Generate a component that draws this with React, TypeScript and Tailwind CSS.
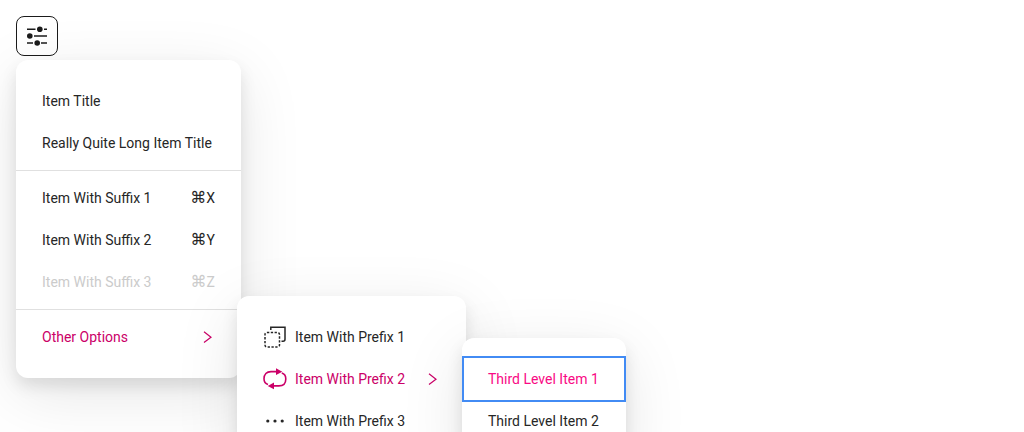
import React from 'react';

const itemClass =
  'mx-0.5 flex h-[42px] items-center px-6 text-left text-sm whitespace-nowrap outline-none';

const panelClass =
  'flex flex-col rounded-xl bg-white py-5 shadow-[0_8px_16px_0_rgba(0,0,0,0.1),0_16px_64px_0_rgba(0,0,0,0.1)]';

function SlidersIcon() {
  return (
    <svg className="size-6" viewBox="0 0 24 24" fill="none" stroke="currentColor" strokeWidth="1.5" aria-hidden="true">
      <path d="M2 5.3h8.5M19 5.3h3M9 12h13M2 19h6M16 19h6" />
      <g fill="currentColor" stroke="none">
        <circle cx="14.8" cy="5.3" r="2.8" />
        <circle cx="4.8" cy="12" r="2.8" />
        <circle cx="12.2" cy="19" r="2.8" />
      </g>
    </svg>
  );
}

function ChevronIcon() {
  return (
    <svg className="size-4" viewBox="0 0 16 16" fill="none" stroke="currentColor" strokeWidth="1.2" aria-hidden="true">
      <path d="M5 2.8L12 8.2L5 13.6" />
    </svg>
  );
}

function DuplicateIcon() {
  return (
    <svg className="size-6" viewBox="0 0 24 24" fill="none" stroke="currentColor" strokeWidth="1.5" aria-hidden="true">
      <path d="M7.8 5V2.2H22V14.2a2 2 0 0 1-2 2h-1.5" />
      <rect x="2" y="7.5" width="14.5" height="14.5" rx="2" strokeDasharray="2.3 1.5" />
    </svg>
  );
}

function RepeatIcon() {
  return (
    <svg className="size-6" viewBox="0 0 24 24" fill="none" stroke="currentColor" strokeWidth="1.6" aria-hidden="true">
      <path d="M5 17.6C2.5 16.8 1 14.5 1 11.8C1 7.2 3.6 4.6 8 4.6H14" />
      <path d="M18.8 6.1C21.3 6.9 22.8 9.2 22.8 11.9C22.8 16.3 20.2 18.9 15.8 18.9H10" />
      <path d="M13 1.3L19.3 4.7L13 8.1ZM11 15.5L4.7 18.9L11 22.3Z" fill="currentColor" stroke="none" />
    </svg>
  );
}

function DotsIcon() {
  return (
    <svg className="size-6" viewBox="0 0 24 24" fill="currentColor" aria-hidden="true">
      <circle cx="4.8" cy="12" r="1.6" />
      <circle cx="12" cy="12" r="1.6" />
      <circle cx="19.2" cy="12" r="1.6" />
    </svg>
  );
}

function Separator() {
  return <hr className="my-1.5 border-0 border-t border-[#e0e0e0]" />;
}

function ShortcutItem({ label, letter, disabled = false }: { label: string; letter: string; disabled?: boolean }) {
  return (
    <button type="button" role="menuitem" disabled={disabled} className={`${itemClass} justify-between disabled:text-[#cbcbcb]`}>
      <span>{label}</span>
      <span className="flex items-center">
        <span className="font-['DejaVu_Sans',sans-serif] text-base">⌘</span>
        {letter}
      </span>
    </button>
  );
}

function ThirdLevelMenu() {
  return (
    <div role="menu" aria-label="Item With Prefix 2" className={`${panelClass} absolute -top-5 left-full -ml-1 w-[164px] text-[#262626]`}>
      <button type="button" role="menuitem" className={`${itemClass} text-[#f90984] ring-2 ring-[#428bf4]`}>
        Third Level Item 1
      </button>
      <button type="button" role="menuitem" className={itemClass}>
        Third Level Item 2
      </button>
    </div>
  );
}

function OptionsMenu() {
  return (
    <div role="menu" aria-label="Other Options" className={`${panelClass} absolute -top-5 left-full -ml-1 w-[229px] text-[#262626]`}>
      <button type="button" role="menuitem" className={`${itemClass} gap-2`}>
        <DuplicateIcon />
        Item With Prefix 1
      </button>
      <div className="relative flex flex-col">
        <button type="button" role="menuitem" aria-haspopup="menu" aria-expanded="true" className={`${itemClass} gap-2 text-[#cb0068]`}>
          <RepeatIcon />
          <span className="grow">Item With Prefix 2</span>
          <ChevronIcon />
        </button>
        <ThirdLevelMenu />
      </div>
      <button type="button" role="menuitem" className={`${itemClass} gap-2`}>
        <DotsIcon />
        Item With Prefix 3
      </button>
    </div>
  );
}

export default function App() {
  return (
    <main className="h-screen overflow-hidden bg-white p-4 font-[Roboto,'Liberation_Sans',sans-serif] text-[#262626]">
      <button
        type="button"
        aria-label="Options"
        aria-haspopup="menu"
        aria-expanded="true"
        className="flex h-10 w-[42px] items-center justify-center rounded-lg border border-[#1b1b1b] text-[#1b1b1b]"
      >
        <SlidersIcon />
      </button>
      <div role="menu" aria-label="Options" className={`${panelClass} relative mt-1 w-[225px]`}>
        <button type="button" role="menuitem" className={itemClass}>
          Item Title
        </button>
        <button type="button" role="menuitem" className={itemClass}>
          Really Quite Long Item Title
        </button>
        <Separator />
        <ShortcutItem label="Item With Suffix 1" letter="X" />
        <ShortcutItem label="Item With Suffix 2" letter="Y" />
        <ShortcutItem label="Item With Suffix 3" letter="Z" disabled />
        <Separator />
        <div className="relative flex flex-col">
          <button type="button" role="menuitem" aria-haspopup="menu" aria-expanded="true" className={`${itemClass} justify-between text-[#cb0068]`}>
            Other Options
            <ChevronIcon />
          </button>
          <OptionsMenu />
        </div>
      </div>
    </main>
  );
}
